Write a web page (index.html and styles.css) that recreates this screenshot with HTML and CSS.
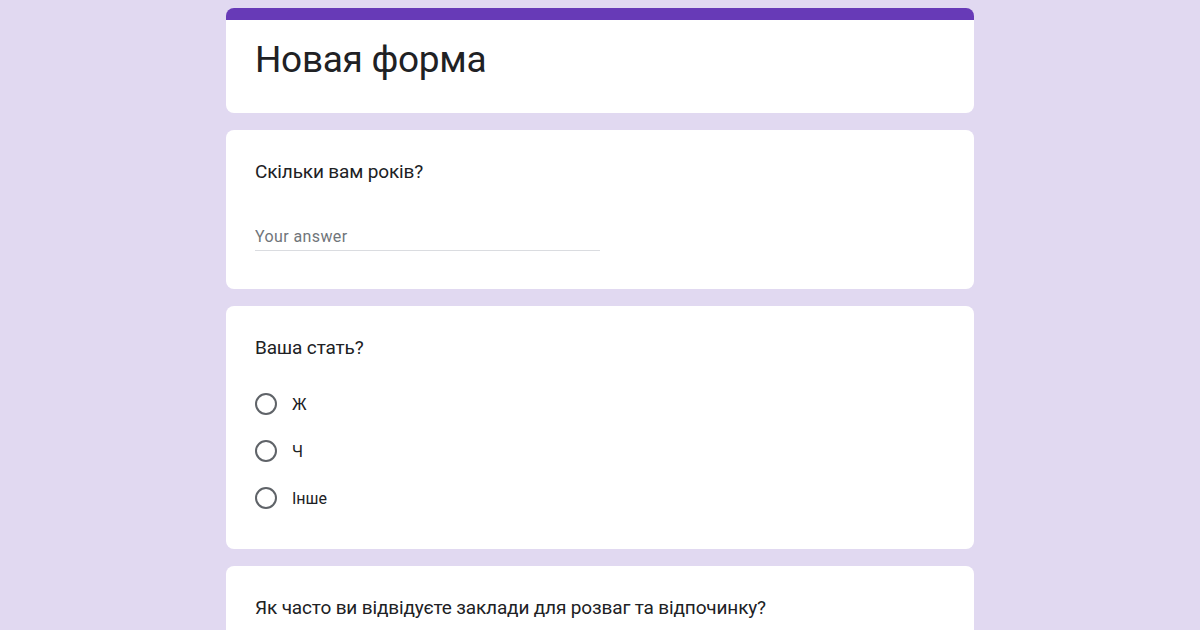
FILE: index.html
```html
<!DOCTYPE html>
<html lang="uk">
<head>
  <meta charset="UTF-8" />
  <title>Новая форма</title>
  <link rel="stylesheet" href="styles.css">
</head>
<body>
  <div class="container">
    <div class="card title-card">
      <h1>Новая форма</h1>
    </div>

    <div class="card question">
      <div class="question-title">Скільки вам років?</div>
      <div class="answer">
        <input type="text" placeholder="Your answer" />
      </div>
    </div>

    <div class="card question">
      <div class="question-title">Ваша стать?</div>
      <div class="options">
        <label class="option"><span class="radio"></span>Ж</label>
        <label class="option"><span class="radio"></span>Ч</label>
        <label class="option"><span class="radio"></span>Інше</label>
      </div>
    </div>

    <div class="card question">
      <div class="question-title">Як часто ви відвідуєте заклади для розваг та відпочинку?</div>
    </div>
  </div>
</body>
</html>
```

FILE: styles.css
```css
body {
  margin: 0;
  padding: 0;
  background: #e1d9f1;
  font-family: Roboto, Arial, sans-serif;
  color: #202124;
  height: 630px;
  overflow: hidden;
}

.container {
  width: 748px;
  margin: 0 auto;
  padding-top: 8px;
  display: flex;
  flex-direction: column;
  gap: 17px;
}

.card {
  background: #fff;
  border-radius: 8px;
  padding: 0 29px;
}

.title-card {
  border-top: 12px solid #673ab7;
  height: 93px;
}

h1 {
  margin: 0;
  padding-top: 16px;
  font-size: 37px;
  font-weight: 400;
  letter-spacing: -0.3px;
  line-height: 48px;
}

.question {
  padding-top: 30px;
  padding-bottom: 38px;
}

.question-title {
  font-size: 19px;
  line-height: 24px;
  letter-spacing: -0.15px;
}

.answer {
  margin-top: 43px;
  width: 345px;
}

.answer input {
  width: 100%;
  border: none;
  border-bottom: 1px solid #dadce0;
  padding: 0 0 4px;
  font-family: Roboto, Arial, sans-serif;
  font-size: 16px;
  letter-spacing: 0.4px;
  color: #202124;
  outline: none;
}

.answer input::placeholder {
  color: #70757a;
}

.options {
  margin: 32px 0 1px;
  display: flex;
  flex-direction: column;
  gap: 23px;
}

.option {
  display: flex;
  align-items: center;
  gap: 15px;
  font-size: 16px;
  height: 24px;
}

.radio {
  width: 18px;
  height: 18px;
  border: 2px solid #5f6368;
  border-radius: 50%;
}
```
